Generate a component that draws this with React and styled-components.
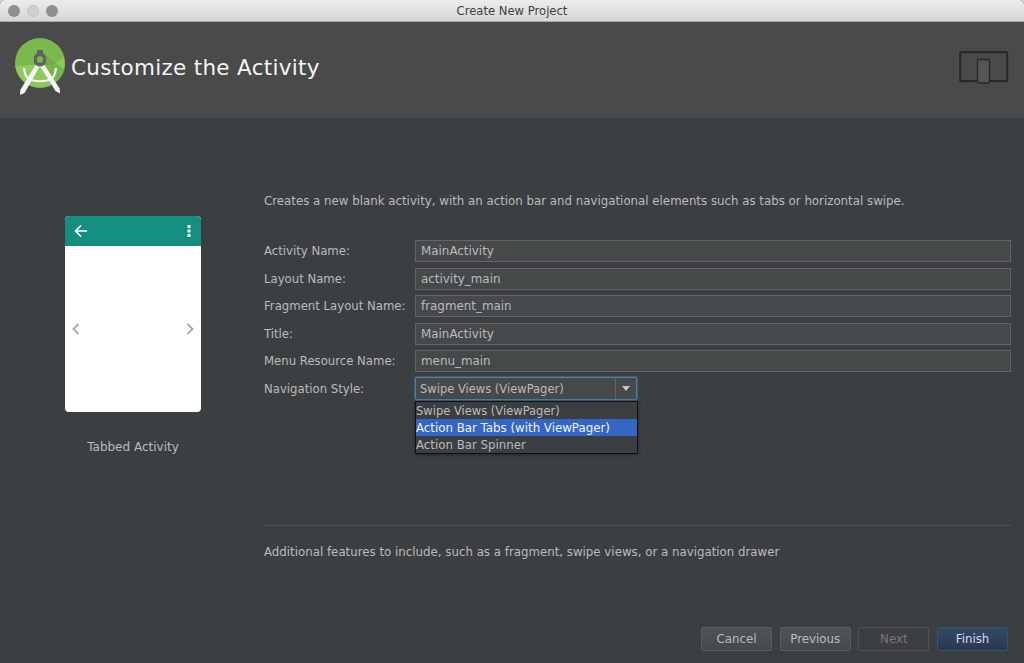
import { Fragment } from 'react';
import styled, { createGlobalStyle } from 'styled-components';

const GlobalStyle = createGlobalStyle`
  html, body {
    margin: 0;
    padding: 0;
    background: #c9d3e0;
  }
  body {
    font-family: "DejaVu Sans", "Open Sans", sans-serif;
    -webkit-font-smoothing: antialiased;
  }
`;

const Window = styled.div`
  width: 1024px;
  height: 663px;
  display: flex;
  flex-direction: column;
  overflow: hidden;
  border-radius: 5px 5px 0 0;
  background: #3c3f41;
`;

const TitleBar = styled.div`
  height: 21px;
  flex: none;
  position: relative;
  display: flex;
  align-items: center;
  justify-content: center;
  background: linear-gradient(#ececec, #d6d6d6);
  border-bottom: 1px solid #a8a8a8;
  font-size: 11.6px;
  color: #3f3f3f;
`;

const Lights = styled.div`
  position: absolute;
  left: 8px;
  top: 5px;
  display: flex;
  gap: 7px;
`;

const Light = styled.span`
  width: 12px;
  height: 12px;
  border-radius: 50%;
  background: ${(props) => (props.$off ? '#d0d0d0' : '#8e8e93')};
  border: ${(props) => (props.$off ? '1px solid #c4c4c4' : '0')};
  box-sizing: border-box;
`;

const Header = styled.div`
  height: 96px;
  flex: none;
  display: flex;
  align-items: flex-start;
  justify-content: space-between;
  background: #4a4a4a;
  padding: 16px 15px 0 15px;
  box-sizing: border-box;
`;

const Brand = styled.div`
  display: flex;
  align-items: center;
  gap: 4px;
`;

const HeaderTitle = styled.h1`
  margin: 0;
  font-size: 21.5px;
  font-weight: 400;
  letter-spacing: 0.3px;
  color: #f4f4f4;
`;

const DeviceSlot = styled.div`
  margin-top: 13px;
  display: flex;
`;

const Body = styled.div`
  flex: 1;
  display: flex;
  min-height: 0;
`;

const Preview = styled.div`
  width: 264px;
  flex: none;
  display: flex;
  flex-direction: column;
  align-items: flex-start;
  padding: 98px 0 0 65px;
  box-sizing: border-box;
`;

const Phone = styled.div`
  width: 136px;
  height: 196px;
  border-radius: 4px;
  overflow: hidden;
  background: #fff;
  display: flex;
  flex-direction: column;
`;

const AppBar = styled.div`
  height: 30px;
  flex: none;
  background: #148f7f;
  display: flex;
  align-items: center;
  justify-content: space-between;
  padding: 0 10px 0 9px;
`;

const PhoneBody = styled.div`
  flex: 1;
  display: flex;
  align-items: center;
  justify-content: space-between;
  padding: 0 7px;
`;

const PreviewLabel = styled.div`
  width: 136px;
  margin-top: 28px;
  text-align: center;
  font-size: 12px;
  white-space: nowrap;
  color: #bbbbbb;
`;

const Content = styled.div`
  flex: 1;
  display: flex;
  flex-direction: column;
  padding: 76px 13px 0 0;
  min-width: 0;
`;

const Description = styled.div`
  font-size: 11.8px;
  line-height: 15px;
  white-space: nowrap;
  color: #bbbbbb;
`;

const Form = styled.div`
  margin-top: 31px;
  display: grid;
  grid-template-columns: 151px 1fr;
  grid-auto-rows: 22px;
  row-gap: 5.6px;
  align-items: center;
`;

const Label = styled.label`
  font-size: 11.7px;
  white-space: nowrap;
  color: #bbbbbb;
`;

const Field = styled.div`
  height: 22px;
  box-sizing: border-box;
  border: 1px solid #646464;
  background: #45494a;
  padding: 0 5px;
  display: flex;
  align-items: center;
  font-size: 11.9px;
  color: #bbbbbb;
`;

const SelectWrap = styled.div`
  position: relative;
  width: 222px;
`;

const Select = styled.div`
  height: 23px;
  box-sizing: border-box;
  display: flex;
  align-items: stretch;
  border: 1px solid #4f7eaa;
  box-shadow: 0 0 0 1px rgba(70, 115, 160, 0.55);
  border-radius: 2px;
  background: #45494a;
  font-size: 11.5px;
  color: #bbbbbb;
`;

const SelectValue = styled.div`
  flex: 1;
  display: flex;
  align-items: center;
  padding-left: 4px;
`;

const SelectArrow = styled.div`
  width: 20px;
  border-left: 1px solid #646464;
  display: flex;
  align-items: center;
  justify-content: center;
  &::after {
    content: '';
    border-left: 4px solid transparent;
    border-right: 4px solid transparent;
    border-top: 5px solid #c4c4c4;
  }
`;

const Menu = styled.div`
  position: absolute;
  top: 24px;
  left: 0;
  width: 223px;
  box-sizing: border-box;
  border: 1px solid #111;
  background: #3c3f41;
  box-shadow: 0 1px 3px rgba(0, 0, 0, 0.4);
`;

const MenuItem = styled.div`
  height: 17px;
  line-height: 18px;
  font-size: ${(props) => (props.$tight ? '11.5px' : '11.8px')};
  white-space: nowrap;
  color: ${(props) => (props.$active ? '#f2f2f2' : '#bbbbbb')};
  background: ${(props) => (props.$active ? '#3566c4' : 'transparent')};
`;

const Divider = styled.div`
  margin-top: 125px;
  height: 1px;
  background: #515151;
`;

const Notes = styled.div`
  margin-top: 19px;
  font-size: 11.8px;
  line-height: 15px;
  white-space: nowrap;
  color: #bbbbbb;
`;

const Buttons = styled.div`
  margin-top: 67px;
  display: flex;
  justify-content: flex-end;
  gap: 7.67px;
  padding-right: 3px;
`;

const Button = styled.div`
  width: 71px;
  height: 24px;
  box-sizing: border-box;
  border-radius: 2px;
  display: flex;
  align-items: center;
  justify-content: center;
  font-size: 11.8px;
  border: 1px solid ${(props) => (props.$primary ? '#3d5169' : props.$disabled ? '#515151' : '#5a5d5e')};
  color: ${(props) => (props.$primary ? '#d4dae0' : props.$disabled ? '#777777' : '#bbbbbb')};
  background: ${(props) =>
    props.$primary
      ? 'linear-gradient(#324a68, #28394f)'
      : props.$disabled
        ? 'transparent'
        : 'linear-gradient(#505455, #46494b)'};
`;

const StudioLogo = () => (
  <svg width="52" height="58" viewBox="0 0 52 58">
    <circle cx="25" cy="25" r="25" fill="#7cb850" />
    <path d="M0.3 28 A25 25 0 0 0 49.7 28 L49 19 L38 27 H14 Z" fill="#8fc95c" />
    <path d="M31 17 L50 32 A25 25 0 0 1 36 47 L27 30 Z" fill="#6aa344" opacity="0.55" />
    <path d="M22 12 H28 V15 L31 18 V25 L28 28 H22 L19 25 V18 L22 15 Z" fill="#616161" />
    <circle cx="25" cy="21.5" r="3.2" fill="#7cb850" />
    <path d="M20.5 27 L24.5 29 L9.5 55 L5 57 L5.3 52 Z" fill="#f5f5f5" />
    <path d="M29.5 27 L25.5 29 L40.5 53 L45 55.5 L44.7 50.5 Z" fill="#f5f5f5" />
    <path d="M9 30 Q10 40 15 41.5 M41 30 Q40 40 35 41.5" fill="none" stroke="#f5f5f5" strokeWidth="2.2" />
    <path d="M14 41.5 Q25 45 36 41.5" fill="none" stroke="#f5f5f5" strokeWidth="2.2" />
  </svg>
);

const DevicesIcon = () => (
  <svg width="50" height="34" viewBox="0 0 50 34">
    <rect x="1.2" y="1.2" width="47" height="29" rx="1" fill="none" stroke="#292929" strokeWidth="2.2" />
    <rect x="18.5" y="8.5" width="12" height="23.5" rx="1" fill="#555555" stroke="#292929" strokeWidth="1.4" />
  </svg>
);

const BackArrow = () => (
  <svg width="14" height="14" viewBox="0 0 14 14">
    <path d="M13 7 H2 M7 1.5 L1.5 7 L7 12.5" fill="none" stroke="#fff" strokeWidth="1.6" />
  </svg>
);

const MoreDots = () => (
  <svg width="4" height="14" viewBox="0 0 4 14">
    <rect x="0.5" y="1" width="3" height="3" fill="#fff" />
    <rect x="0.5" y="5.5" width="3" height="3" fill="#fff" />
    <rect x="0.5" y="10" width="3" height="3" fill="#fff" />
  </svg>
);

const Chevron = ({ flip }) => (
  <svg width="8" height="12" viewBox="0 0 8 12">
    <path d={flip ? 'M1.5 1 L6.5 6 L1.5 11' : 'M6.5 1 L1.5 6 L6.5 11'} fill="none" stroke="#aaaaaa" strokeWidth="1.8" />
  </svg>
);

const FIELDS = [
  { label: 'Activity Name:', value: 'MainActivity' },
  { label: 'Layout Name:', value: 'activity_main' },
  { label: 'Fragment Layout Name:', value: 'fragment_main' },
  { label: 'Title:', value: 'MainActivity' },
  { label: 'Menu Resource Name:', value: 'menu_main' },
];

const App = () => {
  return (
    <>
      <GlobalStyle />
      <Window>
        <TitleBar>
          <Lights>
            <Light />
            <Light $off />
            <Light />
          </Lights>
          Create New Project
        </TitleBar>
        <Header>
          <Brand>
            <StudioLogo />
            <HeaderTitle>Customize the Activity</HeaderTitle>
          </Brand>
          <DeviceSlot>
            <DevicesIcon />
          </DeviceSlot>
        </Header>
        <Body>
          <Preview>
            <Phone>
              <AppBar>
                <BackArrow />
                <MoreDots />
              </AppBar>
              <PhoneBody>
                <Chevron />
                <Chevron flip />
              </PhoneBody>
            </Phone>
            <PreviewLabel>Tabbed Activity</PreviewLabel>
          </Preview>
          <Content>
            <Description>
              Creates a new blank activity, with an action bar and navigational elements such as tabs or horizontal swipe.
            </Description>
            <Form>
              {FIELDS.map((field) => (
                <Fragment key={field.label}>
                  <Label>{field.label}</Label>
                  <Field>{field.value}</Field>
                </Fragment>
              ))}
              <Label>Navigation Style:</Label>
              <SelectWrap>
                <Select>
                  <SelectValue>Swipe Views (ViewPager)</SelectValue>
                  <SelectArrow />
                </Select>
                <Menu>
                  <MenuItem $tight>Swipe Views (ViewPager)</MenuItem>
                  <MenuItem $active>Action Bar Tabs (with ViewPager)</MenuItem>
                  <MenuItem>Action Bar Spinner</MenuItem>
                </Menu>
              </SelectWrap>
            </Form>
            <Divider />
            <Notes>Additional features to include, such as a fragment, swipe views, or a navigation drawer</Notes>
            <Buttons>
              <Button>Cancel</Button>
              <Button>Previous</Button>
              <Button $disabled>Next</Button>
              <Button $primary>Finish</Button>
            </Buttons>
          </Content>
        </Body>
      </Window>
    </>
  );
};

export default App;
